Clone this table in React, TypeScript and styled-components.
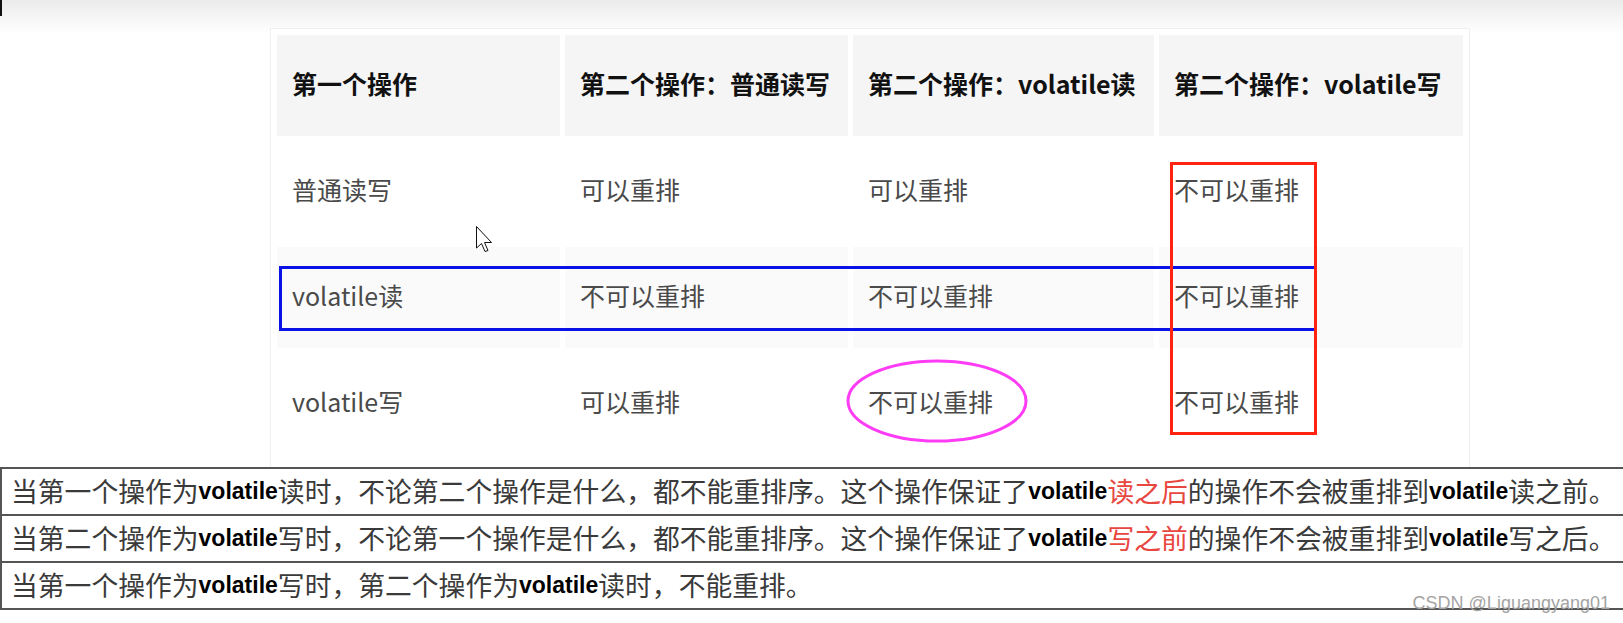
import styled, { createGlobalStyle } from "styled-components";

const GlobalStyle = createGlobalStyle`
  html, body {
    margin: 0;
    padding: 0;
  }
  body {
    width: 1623px;
    height: 623px;
    overflow: hidden;
    background: linear-gradient(to bottom, #ebebeb 0px, #f6f6f6 18px, #ffffff 34px) no-repeat;
    font-family: "Noto Sans CJK SC", "Noto Sans", sans-serif;
  }
`;

const Page = styled.div`
  position: relative;
  width: 1623px;
  height: 623px;
  padding-top: 28px;
  box-sizing: border-box;
`;

const Caret = styled.div`
  position: absolute;
  left: 0;
  top: 0;
  width: 2px;
  height: 16px;
  background: #111;
`;

const TableFrame = styled.div`
  margin-left: 270px;
  width: 1200px;
  height: 439px;
  box-sizing: border-box;
  border: 1px solid #efefef;
  border-bottom: none;
  padding: 1px;
  background: #fff;
  overflow: hidden;
`;

const Grid = styled.table`
  border-collapse: separate;
  border-spacing: 5px;
  table-layout: fixed;
  width: 1196px;
`;

const HeadCell = styled.th<{ $w: number }>`
  width: ${(p) => p.$w}px;
  height: 101px;
  box-sizing: border-box;
  padding: 0 14px 5px 15px;
  background: #f5f5f5;
  text-align: left;
  vertical-align: middle;
  font-size: 25px;
  font-weight: 700;
  color: #111;
  white-space: nowrap;
`;

const BodyCell = styled.td<{ $shade?: boolean }>`
  height: 101px;
  box-sizing: border-box;
  padding: 0 14px 5px 15px;
  background: ${(p) => (p.$shade ? "#fafafa" : "#ffffff")};
  vertical-align: middle;
  font-size: 25px;
  color: #4a4a4a;
  white-space: nowrap;
`;

const Notes = styled.div`
  width: 100%;
  box-sizing: border-box;
  border-left: 2px solid #555;
  border-top: 2px solid #555;
`;

const NoteRow = styled.div`
  height: 47px;
  box-sizing: border-box;
  border-bottom: 2px solid #555;
  display: flex;
  align-items: center;
  padding-left: 9px;
  font-size: 26.8px;
  line-height: 1;
  color: #3a3a3a;
  white-space: nowrap;
`;

const Kw = styled.span`
  font-family: "Liberation Sans", Arial, sans-serif;
  font-weight: 700;
  font-size: 23px;
  color: #000;
`;

const Hot = styled.span`
  color: #e8473f;
`;

const Overlay = styled.svg`
  position: absolute;
  left: 0;
  top: 0;
  pointer-events: none;
`;

const Watermark = styled.div`
  position: absolute;
  right: 13px;
  top: 593px;
  font-family: "Liberation Sans", Arial, sans-serif;
  font-size: 18px;
  line-height: 20px;
  color: #a4a4a4;
`;

const cols = [283, 283, 301, 304];
const heads = ["第一个操作", "第二个操作：普通读写", "第二个操作：volatile读", "第二个操作：volatile写"];
const rows = [
  ["普通读写", "可以重排", "可以重排", "不可以重排"],
  ["volatile读", "不可以重排", "不可以重排", "不可以重排"],
  ["volatile写", "可以重排", "不可以重排", "不可以重排"],
];

export default function App() {
  return (
    <>
      <GlobalStyle />
      <Page>
        <Caret />
        <TableFrame>
          <Grid>
            <thead>
              <tr>
                {heads.map((h, i) => (
                  <HeadCell key={h} $w={cols[i]}>
                    {h}
                  </HeadCell>
                ))}
              </tr>
            </thead>
            <tbody>
              {rows.map((r, ri) => (
                <tr key={ri}>
                  {r.map((c, ci) => (
                    <BodyCell key={ci} $shade={ri === 1}>
                      {c}
                    </BodyCell>
                  ))}
                </tr>
              ))}
            </tbody>
          </Grid>
        </TableFrame>
        <Notes>
          <NoteRow>
            当第一个操作为<Kw>volatile</Kw>读时，不论第二个操作是什么，都不能重排序。这个操作保证了
            <Kw>volatile</Kw>
            <Hot>读之后</Hot>的操作不会被重排到<Kw>volatile</Kw>读之前。
          </NoteRow>
          <NoteRow>
            当第二个操作为<Kw>volatile</Kw>写时，不论第一个操作是什么，都不能重排序。这个操作保证了
            <Kw>volatile</Kw>
            <Hot>写之前</Hot>的操作不会被重排到<Kw>volatile</Kw>写之后。
          </NoteRow>
          <NoteRow>
            当第一个操作为<Kw>volatile</Kw>写时，第二个操作为<Kw>volatile</Kw>读时，不能重排。
          </NoteRow>
        </Notes>
        <Overlay width="1623" height="623" viewBox="0 0 1623 623">
          <rect x="280.5" y="267.5" width="1035" height="62" fill="none" stroke="#0a12e6" strokeWidth="3" />
          <rect x="1171.5" y="163.5" width="144" height="270" fill="none" stroke="#ff2410" strokeWidth="3" />
          <ellipse cx="937" cy="401" rx="89" ry="40" fill="none" stroke="#ff3cf5" strokeWidth="3" />
          <path
            d="M476.5 226.5 L476.5 248 L481.5 243.5 L485 251.5 L488 250.5 L484.5 242.5 L491.5 242.5 Z"
            fill="#fff"
            stroke="#111"
            strokeWidth="1"
            strokeLinejoin="round"
          />
        </Overlay>
        <Watermark>CSDN @Liguangyang01</Watermark>
      </Page>
    </>
  );
}
